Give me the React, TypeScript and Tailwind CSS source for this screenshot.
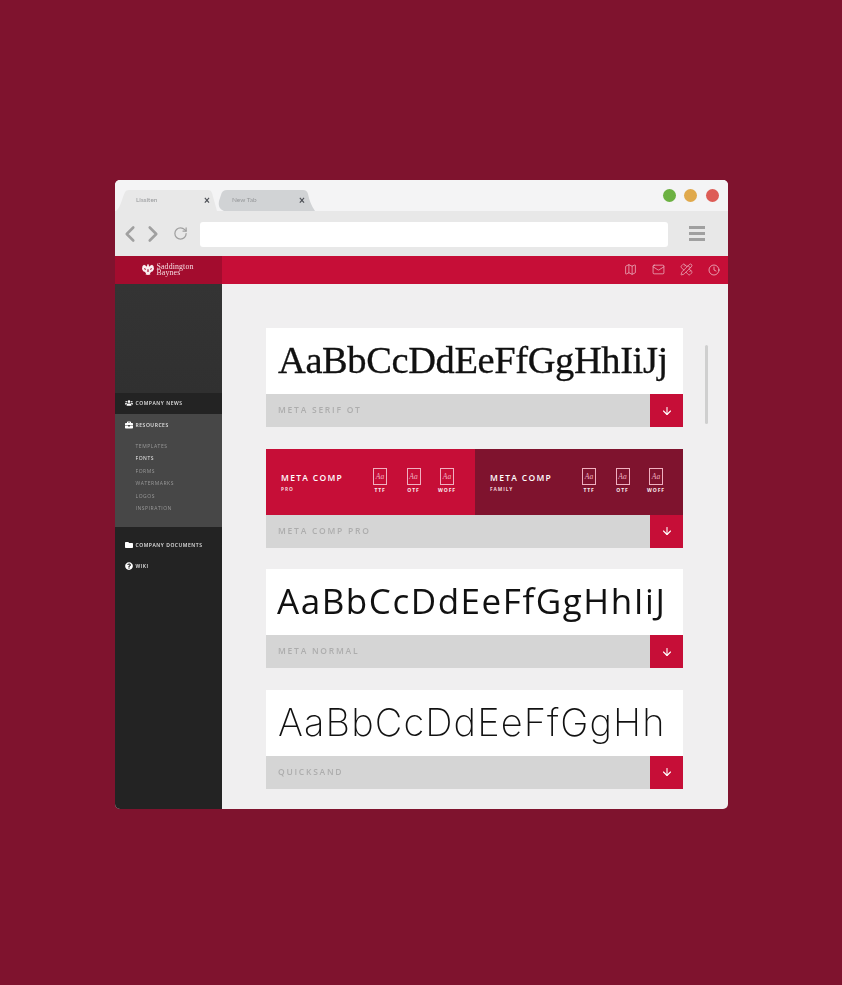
import React from "react";
import { ChevronLeft, ChevronRight, RotateCw, Map as MapIcon, Mail, PencilRuler, Clock, ArrowDown } from "lucide-react";
import { FaUsers, FaBriefcase, FaFolder, FaQuestionCircle } from "react-icons/fa";

const sans = "font-['Open_Sans','Noto_Sans',sans-serif]";

function Tab({ label, fill, path, w, textX, closeX }: { label: string; fill: string; path: string; w: number; textX: string; closeX: string }) {
  return (
    <div className="relative h-[21px] shrink-0" style={{ width: w }}>
      <svg className="absolute inset-0" width={w} height={21} viewBox={`0 0 ${w} 21`}>
        <path d={path} fill={fill} />
      </svg>
      <span className={`absolute top-[5px] ${textX} text-[6.5px] leading-[10px] text-[#97999b] font-['Lato',sans-serif]`}>{label}</span>
      <span className={`absolute top-[6px] ${closeX} text-[10px] leading-[10px] font-bold text-[#4c4f55] font-['Liberation_Sans',sans-serif]`}>×</span>
    </div>
  );
}

function Row({ name, children }: { name: string; children: React.ReactNode }) {
  return (
    <div className="w-[417px]">
      <div className="h-[66px] overflow-hidden">{children}</div>
      <div className="flex h-[33px] bg-[#d5d5d5]">
        <div className={`flex-1 pl-3 text-[8.5px] font-semibold leading-[32px] tracking-[1.75px] text-[#adadad] ${sans}`}>{name}</div>
        <div className="flex w-[33px] items-center justify-center bg-[#c60e37]">
          <ArrowDown size={12} strokeWidth={2.2} className="text-white" />
        </div>
      </div>
    </div>
  );
}

function Formats() {
  return (
    <div className="flex">
      {["TTF", "OTF", "WOFF"].map((f, i) => (
        <div key={f} className={`flex w-[24px] flex-col items-center ${i > 0 ? "ml-[9.5px]" : ""}`}>
          <div className="flex h-[17px] w-[14px] items-center justify-center border border-[#f0b0c0] font-['Liberation_Serif',serif] text-[7.5px] italic leading-none text-[#f0b0c0]">Aa</div>
          <div className={`mt-[2px] text-[5px] font-bold leading-[7px] tracking-[0.9px] text-[#fbeef1] ${sans}`}>{f}</div>
        </div>
      ))}
    </div>
  );
}

function Pack({ title, sub, bg, w }: { title: string; sub: string; bg: string; w: string }) {
  return (
    <div className={`flex h-full items-center ${bg} ${w}`}>
      <div className="ml-[15px] mt-[3px] w-[87px]">
        <div className={`text-[8.5px] font-semibold leading-[10px] tracking-[1.3px] text-white ${sans}`}>{title}</div>
        <div className={`mt-[2.5px] text-[4.8px] font-bold leading-[7px] tracking-[0.9px] text-[#f2d5dc] ${sans}`}>{sub}</div>
      </div>
      <div className="-mt-[1px]">
        <Formats />
      </div>
    </div>
  );
}

function SideItem({ icon, label, className = "" }: { icon: React.ReactNode; label: string; className?: string }) {
  return (
    <div className={`flex h-[21px] items-center pl-[8.5px] ${className}`}>
      <span className="-mt-[1px] flex w-[11px] justify-center text-white">{icon}</span>
      <span className={`ml-[1px] text-[5px] font-semibold tracking-[0.55px] text-[#e2e2e2] ${sans}`}>{label}</span>
    </div>
  );
}

export default function App() {
  return (
    <div className="flex h-[985px] w-[842px] flex-col items-center overflow-hidden bg-[#7f132e] pt-[180px]">
      <div className="ml-[1px] flex h-[629px] w-[613px] flex-col overflow-hidden rounded-[5px] bg-[#f0eff0] blur-[0.3px]">
        {/* tab strip */}
        <div className="relative flex h-[31px] shrink-0 items-end justify-between bg-[#f4f4f5]">
          <div className="flex pl-[1px]">
            <Tab label="Lissiten" fill="#e8e8e8" w={102} textX="left-[20px]" closeX="left-[88px]" path="M0 21 C5 17 6 8 9 2 Q10 0 13 0 L92 0 Q95 0 96 3 L101 21 Z" />
            <Tab label="New Tab" fill="#d1d3d5" w={97} textX="left-[14px]" closeX="left-[81px]" path="M6 21 C2 19 0 17 1 11 L3 5 Q4 0 9 0 L85 0 Q89 0 90 4 Q92 14 97 21 Z" />
          </div>
          <div className="absolute right-[9.5px] top-[9px] flex gap-[8.5px]">
            <span className="h-[13px] w-[13px] rounded-full bg-[#6cb142]" />
            <span className="h-[13px] w-[13px] rounded-full bg-[#e0a94c]" />
            <span className="h-[13px] w-[13px] rounded-full bg-[#dd5c56]" />
          </div>
        </div>
        {/* address bar */}
        <div className="flex h-[45px] shrink-0 items-center bg-[#e8e8e8] pl-[2px]">
          <ChevronLeft size={26} strokeWidth={2.4} className="text-[#a0a0a0]" />
          <ChevronRight size={26} strokeWidth={2.4} className="-ml-[3px] text-[#a0a0a0]" />
          <RotateCw size={15} strokeWidth={2} className="ml-[6.5px] text-[#a0a0a0]" />
          <div className="ml-[12.5px] mt-[1px] h-[25px] w-[468px] rounded-[3px] bg-white" />
          <div className="ml-[21px] flex w-[16px] flex-col gap-[3px]">
            <span className="h-[3px] bg-[#a0a0a0]" />
            <span className="h-[2.5px] bg-[#a0a0a0]" />
            <span className="h-[3px] bg-[#a0a0a0]" />
          </div>
        </div>
        {/* red header */}
        <div className="flex h-[27.5px] shrink-0 bg-[#c60e37]">
          <div className="flex w-[106.5px] items-center justify-center gap-[2.5px] bg-[#a30c2e] pr-[1px]">
            <svg width="12" height="11" viewBox="0 0 12 11" fill="#f9eef0">
              <path d="M0.5 2 L2 0.8 L3.5 1.4 L5 2.8 L5.2 0.8 L6 0 L6.8 0.8 L7 2.8 L8.5 1.4 L10 0.8 L11.5 2 L12 5 L10.8 7.2 L9 8 L8 9.5 L8.4 10.6 L6 11 L3.6 10.6 L4 9.5 L3 8 L1.2 7.2 L0 5 Z M5.5 5 L5 7.5 L5.8 8 L5.8 5 Z M6.5 5 L7 7.5 L6.2 8 L6.2 5 Z M2 4 L2.6 5.6 L4 6 L3.4 4.4 Z M10 4 L9.4 5.6 L8 6 L8.6 4.4 Z" fillRule="evenodd" />
            </svg>
            <div className="font-['Liberation_Serif',serif] text-[7.8px] leading-[6px] tracking-[0.15px] text-[#f7dfe5]">
              Saddington
              <br />
              Baynes
            </div>
          </div>
          <div className="flex flex-1 items-center justify-end gap-[14.75px] pr-[8.5px] text-[#f7e3e8]">
            <MapIcon size={13} strokeWidth={1.1} />
            <Mail size={13} strokeWidth={1.1} />
            <PencilRuler size={13} strokeWidth={1.1} />
            <Clock size={12} strokeWidth={1.3} />
          </div>
        </div>
        {/* body */}
        <div className="flex min-h-0 flex-1">
          <aside className="flex w-[106.5px] shrink-0 flex-col bg-[#232323]">
            <div className="h-[109.5px] bg-gradient-to-b from-[#343434] to-[#303030]" />
            <SideItem icon={<FaUsers size={8} />} label="COMPANY NEWS" />
            <div className="h-[113px] bg-[#474747]">
              <SideItem icon={<FaBriefcase size={8} />} label="RESOURCES" className="mt-[1px]" />
              <div className={`mt-[3.5px] pl-[20.5px] text-[5px] font-medium leading-[12.6px] tracking-[0.55px] text-[#999] ${sans}`}>
                <div>TEMPLATES</div>
                <div className="text-[#e8e8e8]">FONTS</div>
                <div>FORMS</div>
                <div>WATERMARKS</div>
                <div>LOGOS</div>
                <div>INSPIRATION</div>
              </div>
            </div>
            <SideItem icon={<FaFolder size={8} />} label="COMPANY DOCUMENTS" className="mt-[8px]" />
            <SideItem icon={<FaQuestionCircle size={8} />} label="WIKI" />
          </aside>
          <main className="relative flex-1 pl-[44.5px] pt-[44.5px]">
            <div className="flex flex-col gap-[21.5px]">
              <Row name="META SERIF OT">
                <div className="h-full bg-white pl-[12px] font-['Liberation_Serif',serif] text-[38.5px] leading-[64px] tracking-[-0.4px] text-[#111] [-webkit-text-stroke:0.3px_#111]">AaBbCcDdEeFfGgHhIiJj</div>
              </Row>
              <Row name="META COMP PRO">
                <div className="flex h-full">
                  <Pack title="META COMP" sub="PRO" bg="bg-[#c60e37]" w="w-[209px]" />
                  <Pack title="META COMP" sub="FAMILY" bg="bg-[#7f132e]" w="w-[208px]" />
                </div>
              </Row>
              <Row name="META NORMAL">
                <div className="h-full bg-white pl-[11px] font-['Open_Sans',sans-serif] text-[35px] leading-[64px] tracking-[1.55px] text-[#111]">AaBbCcDdEeFfGgHhIiJ</div>
              </Row>
              <Row name="QUICKSAND">
                <div className="h-full bg-white pl-[12px] font-['Inter',sans-serif] text-[38px] font-extralight leading-[64px] tracking-[1.1px] text-[#111]">AaBbCcDdEeFfGgHh</div>
              </Row>
            </div>
            <div className="absolute left-[483.5px] top-[61px] h-[79px] w-[3px] rounded-full bg-[#cfcfcf]" />
          </main>
        </div>
      </div>
    </div>
  );
}
